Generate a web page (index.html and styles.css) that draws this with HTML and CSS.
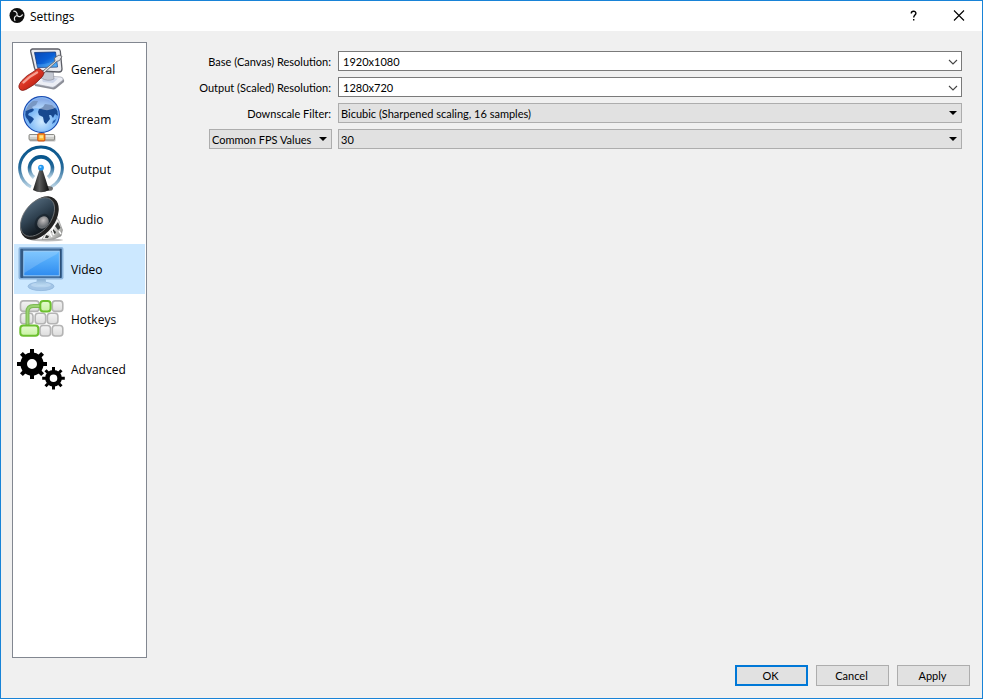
FILE: index.html
```html
<!DOCTYPE html>
<html lang="en">
<head>
    <meta charset="UTF-8">
    <meta name="viewport" content="width=device-width, initial-scale=1.0">
    <title>Settings</title>
    <link rel="stylesheet" href="styles.css">
</head>
<body>
    <div class="window">
        <header class="titlebar">
            <svg class="logo" viewBox="0 0 16 16" aria-hidden="true">
                <circle cx="8" cy="7.5" r="7.500" fill="#0c0c0c"/>
                <g fill="none" stroke="#e8e8e8" stroke-width="1.200" stroke-linecap="round">
                    <path d="M8 7C8.600 5 7 3.200 4.800 3.200"/>
                    <path d="M8 7C8.600 5 7 3.200 4.800 3.200" transform="rotate(120 8 7.500)"/>
                    <path d="M8 7C8.600 5 7 3.200 4.800 3.200" transform="rotate(240 8 7.500)"/>
                </g>
            </svg>
            <h1>Settings</h1>
            <button class="title-btn" type="button" aria-label="Help">
                <svg viewBox="0 0 12 12"><path d="M4.300 3.400C4.300 0.600 8.900 0.600 8.900 3.200C8.900 5 6.700 5 6.700 7.400M6.700 9V10.600" fill="none" stroke="#000" stroke-width="1.400"/></svg>
            </button>
            <button class="title-btn" type="button" aria-label="Close">
                <svg viewBox="0 0 12 12"><path d="M1 0.500L11 10.500M11 0.500L1 10.500" fill="none" stroke="#000" stroke-width="1.100"/></svg>
            </button>
        </header>

        <main class="content">
            <nav class="sidebar">
                <a class="item" href="#general">
                    <svg viewBox="0 0 48 48" aria-hidden="true">
                        <defs>
                            <linearGradient id="crt" x1="0" y1="0" x2="1" y2="1">
                                <stop offset="0" stop-color="#0a48b4"/>
                                <stop offset=".5" stop-color="#0a5fd6"/>
                                <stop offset="1" stop-color="#4fb2f8"/>
                            </linearGradient>
                            <linearGradient id="handle" x1="0" y1="0" x2="1" y2="1">
                                <stop offset="0" stop-color="#f58070"/>
                                <stop offset=".45" stop-color="#dc3524"/>
                                <stop offset="1" stop-color="#9c1208"/>
                            </linearGradient>
                        </defs>
                        <path d="M17 38L25 32L44 33Q48 34 47 37L39 43.5Q37 45 34 44L18 41Z" fill="#8d8f98"/>
                        <path d="M17 37L25 31L44 32Q47 33 46 35L38 41.5Q36 43 33 42L18 39Z" fill="#eceef5" stroke="#9a9dab" stroke-width=".7"/>
                        <path d="M25 35L29 32.500L41 33.500L36 38L26 37Z" fill="#cdd5e8"/>
                        <path d="M23 24L36 25L37 34Q31 37 24 33Z" fill="#c4c8d2" stroke="#888c98" stroke-width=".6"/>
                        <path d="M15.500 4L41 4Q43 4 43.300 6L45 24Q45 27 42 27L21 26Q18 26 17.500 23L13.700 6.500Q13.300 4.500 15.500 4Z" fill="#e8e9ee" stroke="#5c5e66" stroke-width="1.300"/>
                        <path d="M17.500 7.500L38.500 7L40.500 22L20.500 22.500Z" fill="url(#crt)" stroke="#12377c" stroke-width=".8"/>
                        <path d="M20 19Q29 20 40 15L40.500 22L20.500 22.500Z" fill="#6dc5ff" opacity=".3"/>
                        <path d="M23.500 28L38 16L37.500 13L42 10L45 11.500L42.500 15.500L39.500 16.500L26 29Z" fill="#e5e5e8" stroke="#65666c" stroke-width=".9"/>
                        <path d="M5 35.500Q10 30 16 27L20 24Q22 23 24 24.500L27 27.500Q27 29.500 25 32L23 34Q18 40 9 44.500Q5 46.500 3 44.500Q0 41 5 35.500Z" fill="url(#handle)" stroke="#811b15" stroke-width=".8"/>
                        <path d="M6.500 37.500Q13 31 20 27.500" fill="none" stroke="#ffc3b7" stroke-width="2.400" stroke-linecap="round" opacity=".75"/>
                    </svg>
                    <span>General</span>
                </a>
                <a class="item" href="#stream">
                    <svg viewBox="0 0 48 48" aria-hidden="true">
                        <defs>
                            <radialGradient id="globe" cx=".5" cy=".7" r=".65">
                                <stop offset="0" stop-color="#d0eaff"/>
                                <stop offset=".6" stop-color="#78b6f6"/>
                                <stop offset="1" stop-color="#2a66d0"/>
                            </radialGradient>
                        </defs>
                        <path d="M22.500 36H27V41H22.500Z" fill="#aaa" stroke="#777" stroke-width=".5"/>
                        <rect x="12.500" y="40.500" width="26" height="6" rx="1" fill="#999" opacity=".6"/>
                        <rect x="12" y="39.500" width="25.500" height="5.500" rx="1" fill="#cfcfcb" stroke="#74746e" stroke-width=".8"/>
                        <path d="M13 41H37" stroke="#fff"/>
                        <rect x="20.800" y="38.800" width="7" height="7" rx="1" fill="#ffb128" stroke="#da5710" stroke-width="1.200"/>
                        <rect x="22.500" y="40.300" width="3.600" height="3" fill="#ffe28a"/>
                        <circle cx="24.500" cy="19.500" r="17.800" fill="url(#globe)" stroke="#1a4cb2" stroke-width="1.200"/>
                        <path d="M8 16Q11 9 16 6L21 6L19 10L15 12L17 15L15 17L12 18L11 20L15 22L17 24L15 27L13 29L11 25L8 21Z" fill="#184c98"/>
                        <path d="M21 17L22 14L26 12L28 9L35 10L41 16L41 21L38 19L36 23L34 20L32 20L33 24L29 29L27 27L26 22L22 20Z" fill="#17488f"/>
                        <path d="M36 26L39 24L38 27L35 29Z" fill="#235dae"/>
                        <path d="M9 12Q15 2 25 2Q34 2 40 12Q32 17 24 14Q16 12 9 16Z" fill="#fff" opacity=".42"/>
                        <circle cx="24.500" cy="19.500" r="16.700" fill="none" stroke="#8cc3fa" stroke-width=".8"/>
                    </svg>
                    <span>Stream</span>
                </a>
                <a class="item" href="#output">
                    <svg viewBox="0 0 48 48" aria-hidden="true">
                        <defs>
                            <linearGradient id="wave" x1="0" y1="0" x2="0" y2="1">
                                <stop offset="0" stop-color="#07558c"/>
                                <stop offset=".5" stop-color="#24699a"/>
                                <stop offset="1" stop-color="#b9d3e4"/>
                            </linearGradient>
                            <linearGradient id="mast">
                                <stop offset="0" stop-color="#1a1a1a"/>
                                <stop offset=".4" stop-color="#5c5c5c"/>
                                <stop offset="1" stop-color="#0c0c0c"/>
                            </linearGradient>
                        </defs>
                        <path d="M14 42A21.300 21.300 0 1 1 34 42" fill="none" stroke="url(#wave)" stroke-width="3"/>
                        <path d="M17 32.500A11.500 11.500 0 1 1 31 32.500" fill="none" stroke="url(#wave)" stroke-width="3.600"/>
                        <ellipse cx="31" cy="43.500" rx="5" ry="2.500" fill="#333" opacity=".7"/>
                        <path d="M22.300 25H25.700L32 45Q24 49.500 16 45Z" fill="url(#mast)"/>
                        <circle cx="24" cy="22.700" r="2.900" fill="#2498f0"/>
                        <circle cx="23.400" cy="22" r="1.100" fill="#a4dcff"/>
                    </svg>
                    <span>Output</span>
                </a>
                <a class="item" href="#audio">
                    <svg viewBox="0 0 48 48" aria-hidden="true">
                        <defs>
                            <linearGradient id="cone" x1="0" y1="0" x2="1" y2=".6">
                                <stop offset="0" stop-color="#597083"/>
                                <stop offset=".55" stop-color="#2f4150"/>
                                <stop offset="1" stop-color="#10171d"/>
                            </linearGradient>
                            <linearGradient id="magnet" x1="0" y1="0" x2="1" y2="1">
                                <stop offset="0" stop-color="#777"/>
                                <stop offset=".5" stop-color="#f2f2f0"/>
                                <stop offset="1" stop-color="#777874"/>
                            </linearGradient>
                            <radialGradient id="cap" cx=".4" cy=".35">
                                <stop offset="0" stop-color="#c4c0c0"/>
                                <stop offset="1" stop-color="#6a6e72"/>
                            </radialGradient>
                        </defs>
                        <ellipse cx="30" cy="45" rx="16" ry="1.500" fill="#777" opacity=".5"/>
                        <path d="M38 20L42 26L45.500 35L44 41L37 44L25 44.500Z" fill="url(#magnet)" stroke="#777" stroke-width=".5"/>
                        <path d="M41 27L43.500 33L41 35L38 31ZM36 34L39 37L38 39L34 37ZM29 40L32 41L31 43L28 43Z" fill="#353735"/>
                        <path d="M38 29L35 35L37 40M32 37L35 42M42 36L44 39" fill="none" stroke="#fff" stroke-width="1.400"/>
                        <ellipse cx="22.500" cy="23" rx="15.500" ry="24.500" transform="rotate(37 22.500 23)" fill="#222"/>
                        <ellipse cx="20.500" cy="22" rx="13.500" ry="22" transform="rotate(37 20.500 22)" fill="url(#cone)" stroke="#777b7d" stroke-width=".8"/>
                        <ellipse cx="25" cy="27" rx="6.500" ry="9" transform="rotate(37 25 27)" fill="#11191f" opacity=".45"/>
                        <ellipse cx="26" cy="27.500" rx="5.500" ry="6.500" transform="rotate(37 26 27.500)" fill="url(#cap)"/>
                    </svg>
                    <span>Audio</span>
                </a>
                <a class="item selected" href="#video" aria-current="page">
                    <svg viewBox="0 0 48 48" aria-hidden="true">
                        <defs>
                            <linearGradient id="lcd" x1="0" y1="0" x2="0" y2="1">
                                <stop offset="0" stop-color="#66bcff"/>
                                <stop offset="1" stop-color="#2f8cf0"/>
                            </linearGradient>
                            <linearGradient id="foot" x1="0" y1="0" x2="0" y2="1">
                                <stop offset="0" stop-color="#83aacf"/>
                                <stop offset="1" stop-color="#c0def5"/>
                            </linearGradient>
                        </defs>
                        <ellipse cx="24" cy="41.300" rx="13" ry="4.300" fill="#a3c5e6" stroke="#8fb5da" stroke-width=".8"/>
                        <ellipse cx="24" cy="40" rx="10" ry="2.300" fill="#b8d5ef"/>
                        <path d="M20 33H28.500L29.500 40Q24 42 19 40Z" fill="url(#foot)"/>
                        <rect x="1.500" y="2" width="45" height="32.500" rx="2" fill="#8cb4dc"/>
                        <rect x="3" y="3.500" width="42" height="29.500" rx="1" fill="#44709f"/>
                        <path d="M5 4V33M43.500 4V33" stroke="#2c5078" stroke-width="1.400"/>
                        <rect x="6.800" y="6.200" width="35.500" height="24.600" fill="url(#lcd)" stroke="#a5d5ff" stroke-width=".8"/>
                        <path d="M7.200 6.600H42L40 9Q24 17 7.200 28Z" fill="#fff" opacity=".16"/>
                    </svg>
                    <span>Video</span>
                </a>
                <a class="item" href="#hotkeys">
                    <svg viewBox="0 0 48 48" aria-hidden="true">
                        <defs>
                            <linearGradient id="key" x1="0" y1="0" x2="0" y2="1">
                                <stop offset="0" stop-color="#f4f4f4"/>
                                <stop offset="1" stop-color="#dcdcdc"/>
                            </linearGradient>
                            <linearGradient id="keyOn" x1="0" y1="0" x2="0" y2="1">
                                <stop offset="0" stop-color="#e5fbd0"/>
                                <stop offset="1" stop-color="#c8f2a2"/>
                            </linearGradient>
                        </defs>
                        <g fill="url(#key)" stroke="#b4b4b4" stroke-width="1.600">
                            <rect x="3.500" y="5.900" width="18.500" height="10.500" rx="3"/>
                            <rect x="35.300" y="5.900" width="10.500" height="10.500" rx="3"/>
                            <rect x="3.500" y="18.200" width="12.500" height="10.500" rx="3"/>
                            <rect x="18.200" y="18.200" width="10.500" height="10.500" rx="3"/>
                            <rect x="30.400" y="18.200" width="10.500" height="10.500" rx="3"/>
                            <rect x="23" y="30.500" width="10.500" height="10.500" rx="3"/>
                            <rect x="35.300" y="30.500" width="10.500" height="10.500" rx="3"/>
                        </g>
                        <path d="M10.500 30V17Q10.500 11 16.500 11H23" fill="none" stroke="#7db955" stroke-width="4"/>
                        <path d="M10.500 30V17Q10.500 11 16.500 11H23" fill="none" stroke="#9bd373" stroke-width="1.800"/>
                        <g fill="url(#keyOn)" stroke="#6cc02f" stroke-width="2">
                            <rect x="23.300" y="5.900" width="10.300" height="10.500" rx="3"/>
                            <rect x="3.300" y="30.500" width="18" height="10.300" rx="3"/>
                        </g>
                    </svg>
                    <span>Hotkeys</span>
                </a>
                <a class="item" href="#advanced">
                    <svg viewBox="0 0 48 48" aria-hidden="true">
                        <g fill="none" stroke="#000">
                            <circle cx="15" cy="19" r="8.300" stroke-width="6.600"/>
                            <path d="M15 4V9M15 29V34M0 19H5M25 19H30M4.400 8.400L8 12M22 26L25.600 29.600M4.400 29.600L8 26M22 12L25.600 8.400" stroke-width="4"/>
                            <circle cx="36.500" cy="33.300" r="6.100" stroke-width="4.600"/>
                            <path d="M36.500 22V26M36.500 40.600V44.600M25.200 33.300H29M44 33.300H47.800M28.500 25.300L31 27.800M42 38.800L44.500 41.300M28.500 41.300L31 38.800M42 27.800L44.500 25.300" stroke-width="3"/>
                        </g>
                    </svg>
                    <span>Advanced</span>
                </a>
            </nav>

            <form class="settings" id="video-form">
                <label for="base-res">Base (Canvas) Resolution:</label>
                <div class="combo editable">
                    <input id="base-res" type="text" value="1920x1080">
                    <svg class="chevron" viewBox="0 0 10 6"><path d="M1 1L5 5L9 1" fill="none" stroke="#444" stroke-width="1.100"/></svg>
                </div>

                <label for="output-res">Output (Scaled) Resolution:</label>
                <div class="combo editable">
                    <input id="output-res" type="text" value="1280x720">
                    <svg class="chevron" viewBox="0 0 10 6"><path d="M1 1L5 5L9 1" fill="none" stroke="#444" stroke-width="1.100"/></svg>
                </div>

                <label for="filter">Downscale Filter:</label>
                <div class="combo">
                    <select id="filter">
                        <option>Bicubic (Sharpened scaling, 16 samples)</option>
                    </select>
                    <svg class="arrow" viewBox="0 0 8 4"><path d="M0 0H8L4 4Z"/></svg>
                </div>

                <div class="combo fps-type">
                    <select aria-label="FPS type">
                        <option>Common FPS Values</option>
                    </select>
                    <svg class="arrow" viewBox="0 0 8 4"><path d="M0 0H8L4 4Z"/></svg>
                </div>
                <div class="combo">
                    <select aria-label="FPS value">
                        <option>30</option>
                    </select>
                    <svg class="arrow" viewBox="0 0 8 4"><path d="M0 0H8L4 4Z"/></svg>
                </div>
            </form>
        </main>

        <footer class="buttons">
            <button class="btn default" type="submit" form="video-form">OK</button>
            <button class="btn" type="button">Cancel</button>
            <button class="btn" type="button">Apply</button>
        </footer>
    </div>
</body>
</html>
```
FILE: styles.css
```css
* {
    box-sizing: border-box;
}
body {
    margin: 0;
    font-family: Lato, Tahoma, sans-serif;
    font-size: 11px;
    color: #000;
}
.window {
    display: flex;
    flex-direction: column;
    min-height: 100vh;
    background: #f0f0f0;
    border: 1px solid #1883d7;
}

/* title bar */
.titlebar {
    display: flex;
    align-items: center;
    height: 30px;
    padding-left: 8px;
    background: #fff;
}
.logo {
    width: 16px;
    height: 16px;
}
h1 {
    flex: 1;
    margin: 0 0 0 5px;
    font: 12px "Open Sans", "Noto Sans", sans-serif;
}
.title-btn {
    display: flex;
    align-items: center;
    justify-content: center;
    width: 46px;
    height: 30px;
    padding: 0;
    border: none;
    background: none;
}
.title-btn svg {
    width: 12px;
    height: 12px;
}

.content {
    flex: 1;
    display: flex;
    gap: 24px;
    padding: 11px 20px 0 11px;
}

/* category list */
.sidebar {
    width: 135px;
    padding: 1px;
    background: #fff;
    border: 1px solid #828790;
}
.item {
    display: flex;
    align-items: center;
    gap: 6px;
    height: 50px;
    padding-left: 3px;
    font: 12px "Open Sans", "Noto Sans", sans-serif;
    color: #000;
    text-decoration: none;
}
.item svg {
    width: 48px;
    height: 48px;
}
.item.selected {
    background: #cce8ff;
}

/* video settings */
.settings {
    flex: 1;
    display: grid;
    grid-template-columns: 161px 1fr;
    grid-auto-rows: 20px;
    gap: 6px;
    padding-top: 9px;
}
.settings label {
    padding-right: 1px;
    line-height: 22px;
    text-align: right;
}
.combo {
    position: relative;
}
.combo input,
.combo select {
    display: block;
    width: 100%;
    height: 20px;
    margin: 0;
    padding: 0 14px 0 2px;
    border: 1px solid #adadad;
    border-radius: 0;
    background: #e1e1e1;
    color: #000;
    font: inherit;
    appearance: none;
}
.combo.editable input {
    padding-left: 4px;
    background: #fff;
    border-color: #7a7a7a;
}
.fps-type {
    justify-self: end;
    width: 123px;
}
.chevron,
.arrow {
    position: absolute;
    pointer-events: none;
}
.chevron {
    top: 8px;
    right: 4px;
    width: 10px;
    height: 6px;
}
.arrow {
    top: 8px;
    right: 5px;
    width: 8px;
    height: 4px;
}

/* bottom buttons */
.buttons {
    display: flex;
    justify-content: flex-end;
    gap: 8px;
    padding: 7px 12px 12px;
}
.btn {
    width: 73px;
    height: 21px;
    padding: 0 2px 0 0;
    border: 1px solid #adadad;
    background: #e1e1e1;
    color: #000;
    font: inherit;
}
.btn.default {
    border: 2px solid #0078d7;
}
```
